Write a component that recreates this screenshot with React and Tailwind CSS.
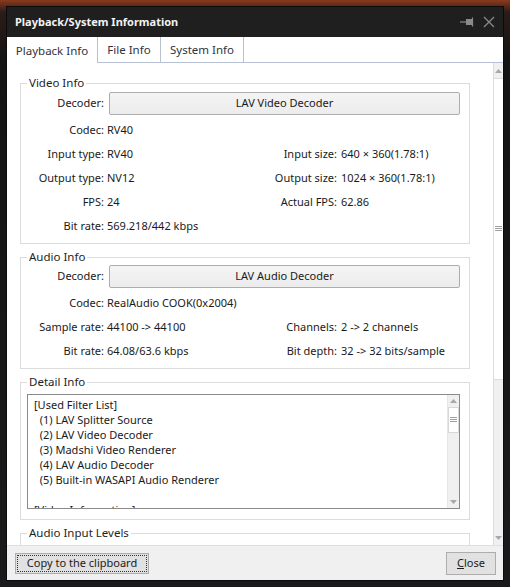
import React from "react";

const F = { fontFamily: '"Segoe UI", "Noto Sans", "Open Sans", sans-serif' };

function Group({ title, className = "", children }) {
  return (
    <div className={"relative border border-[#dcdcdc] " + className}>
      <div className="absolute left-[6px] top-[-9px] bg-white px-[2px] text-[11.5px] leading-[16px] text-[#1e1e1e]">
        {title}
      </div>
      {children}
    </div>
  );
}

function DecoderRow({ name }) {
  return (
    <div className="flex h-[23px] items-center">
      <div className="w-[83px] text-right">Decoder:</div>
      <div className="ml-[5px] flex h-[23px] flex-1 items-center justify-center rounded-[2px] border border-[#adadad] bg-[linear-gradient(#f4f4f4,#ececec)]">
        {name}
      </div>
    </div>
  );
}

function Row({ l, v, rl, rv }) {
  return (
    <div className="grid h-[24px] grid-cols-[83px_133px_100px_1fr] items-center whitespace-nowrap">
      <div className="text-right">{l}</div>
      <div className="pl-[3px]">{v}</div>
      <div className="text-right">{rl}</div>
      <div className="pl-[4px]">{rv}</div>
    </div>
  );
}

function Arrow({ up }) {
  return (
    <svg width="7" height="4" viewBox="0 0 7 4">
      {up ? <path d="M0 4 L3.5 0 L7 4Z" fill="#a8a8a8" /> : <path d="M0 0 L3.5 4 L7 0Z" fill="#a8a8a8" />}
    </svg>
  );
}

function Grip() {
  return (
    <svg width="7" height="6" viewBox="0 0 7 6">
      <path d="M0 0.5H7M0 2.5H7M0 4.5H7" stroke="#a0a0a0" strokeWidth="1" />
    </svg>
  );
}

export default function App() {
  const lines = [
    "[Used Filter List]",
    "  (1) LAV Splitter Source",
    "  (2) LAV Video Decoder",
    "  (3) Madshi Video Renderer",
    "  (4) LAV Audio Decoder",
    "  (5) Built-in WASAPI Audio Renderer",
    " ",
    "[Video Information]",
  ];
  return (
    <div
      className="h-[587px] w-[510px] overflow-hidden bg-[linear-gradient(180deg,#8a3a1e_0px,#2a1c18_12px,#141414_60px,#1a1a1c_100%)] pl-[6px] pt-[6px] text-[11px] text-[#1a1a1a]"
      style={F}
    >
      <div className="flex h-[575px] w-[498px] flex-col border border-[#0b0b0b] bg-white">
        {/* title bar */}
        <div className="flex h-[30px] items-center bg-[#1f1f1f] pl-[8px] pr-[8px]">
          <div className="pt-[-1px] text-[11px] font-bold text-[#f2f2f2]">Playback/System Information</div>
          <div className="ml-auto flex items-center gap-[9px]">
            <svg width="14" height="10" viewBox="0 0 14 10">
              <path d="M0 5H6" stroke="#8a8a8a" strokeWidth="1.2" />
              <rect x="6" y="2" width="6" height="6" fill="#8a8a8a" />
              <path d="M12.5 0.5V9.5" stroke="#8a8a8a" strokeWidth="1.2" />
            </svg>
            <svg width="12" height="12" viewBox="0 0 12 12">
              <path d="M1 1L11 11M11 1L1 11" stroke="#8a8a8a" strokeWidth="1.3" />
            </svg>
          </div>
        </div>
        {/* tabs */}
        <div className="flex h-[26px] items-end bg-white text-[11.5px]">
          <div className="flex h-[26px] w-[91px] items-center justify-center border-r border-[#b8c0d4] bg-white pt-[2px] text-[#2f3340]">
            Playback Info
          </div>
          <div className="flex h-[26px] w-[63px] items-center justify-center border-b border-r border-[#b8c0d4] text-[#2f3340]">
            File Info
          </div>
          <div className="flex h-[26px] w-[83px] items-center justify-center border-b border-r border-[#b8c0d4] text-[#2f3340]">
            System Info
          </div>
          <div className="h-[26px] flex-1 border-b border-[#b8c0d4]"></div>
        </div>
        {/* content */}
        <div className="flex h-[482px] overflow-hidden">
          <div className="flex-1 overflow-hidden pl-[13px] pr-[23px] pt-[20px]">
            <Group title="Video Info" className="h-[161px] px-0 pr-[9px] pt-[8px]">
              <DecoderRow name="LAV Video Decoder" />
              <div className="h-[3px]"></div>
              <Row l="Codec:" v="RV40" />
              <Row l="Input type:" v="RV40" rl="Input size:" rv="640 × 360(1.78:1)" />
              <Row l="Output type:" v="NV12" rl="Output size:" rv="1024 × 360(1.78:1)" />
              <Row l="FPS:" v="24" rl="Actual FPS:" rv="62.86" />
              <Row l="Bit rate:" v="569.218/442 kbps" />
            </Group>
            <Group title="Audio Info" className="mt-[13px] h-[112px] pr-[9px] pt-[7px]">
              <DecoderRow name="LAV Audio Decoder" />
              <div className="h-[3px]"></div>
              <Row l="Codec:" v="RealAudio COOK(0x2004)" />
              <Row l="Sample rate:" v="44100 -> 44100" rl="Channels:" rv="2 -> 2 channels" />
              <Row l="Bit rate:" v="64.08/63.6 kbps" rl="Bit depth:" rv="32 -> 32 bits/sample" />
            </Group>
            <Group title="Detail Info" className="mt-[13px] h-[138px] pl-[6px] pr-[9px] pt-[11px]">
              <div className="flex h-[115px] border border-[#8a8a8a] bg-white">
                <div className="flex-1 overflow-hidden pl-[6px] pt-[2px] leading-[15px] whitespace-pre">
                  {lines.map((t, i) => (
                    <div key={i}>{t}</div>
                  ))}
                </div>
                <div className="flex w-[12px] flex-col items-center border-l border-[#e6e6e6] bg-[#f0f0f0]">
                  <div className="flex h-[12px] w-full items-center justify-center">
                    <Arrow up />
                  </div>
                  <div className="flex h-[26px] w-[11px] items-center justify-center border border-[#d8d8d8] bg-white">
                    <Grip />
                  </div>
                  <div className="flex-1"></div>
                  <div className="flex h-[12px] w-full items-center justify-center">
                    <Arrow />
                  </div>
                </div>
              </div>
            </Group>
            <Group title="Audio Input Levels" className="mt-[13px] h-[60px]">
              <div className="ml-[407px] mt-[12px] h-[14px] w-[18px] border border-[#c8c8c8] bg-[#e8e8e8]"></div>
            </Group>
          </div>
          {/* outer scrollbar */}
          <div className="flex w-[10px] flex-col border-l border-[#dcdcdc] bg-[#f0f0f0]">
            <div className="flex h-[15px] items-center justify-center">
              <Arrow up />
            </div>
            <div className="flex h-[302px] items-center justify-center border-y border-[#dcdcdc] bg-white">
              <Grip />
            </div>
            <div className="flex-1"></div>
            <div className="flex h-[14px] items-center justify-center">
              <Arrow />
            </div>
          </div>
        </div>
        {/* bottom bar */}
        <div className="flex flex-1 items-center justify-between border-t border-[#dfdfdf] bg-[#f0f0f0] pl-[8px] pr-[7px]">
          <div className="flex h-[21px] w-[134px] items-center border border-[#adadad] bg-[#e1e1e1] p-[1px]">
            <div className="flex h-full w-full items-center justify-center border border-dotted border-[#333]">
              Copy to the clipboard
            </div>
          </div>
          <div className="flex h-[23px] w-[50px] items-center justify-center border border-[#adadad] bg-[#e1e1e1]">
            <span>
              <span className="underline">C</span>lose
            </span>
          </div>
        </div>
      </div>
    </div>
  );
}
